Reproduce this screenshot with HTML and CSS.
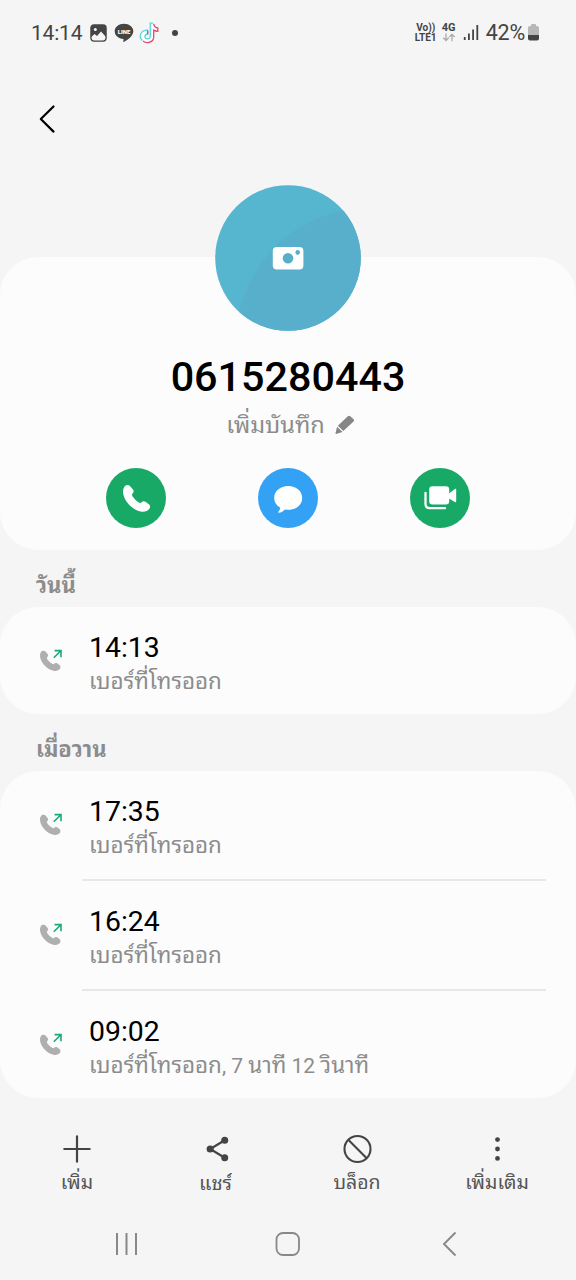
FILE: index.html
```html
<!DOCTYPE html>
<html lang="th">
<head>
<meta charset="utf-8">
<title>0615280443</title>
<link rel="stylesheet" href="styles.css">
</head>
<body>
<svg class="defs" width="0" height="0" aria-hidden="true">
  <symbol id="handset" viewBox="16.8 17 26.8 26.8">
    <path d="M18.800 18.100C20.200 16.600 22.600 16.700 23.900 18.200L26.700 21.500C27.800 22.900 27.500 24.300 26.500 25.300C25.600 26.200 25.500 27 26.200 28.100C27.800 30.600 30 32.900 32.600 34.400C33.700 35.100 34.500 34.900 35.300 34.100C36.400 32.900 37.900 32.900 39.100 33.700L42.500 36.200C43.900 37.300 44 39 43.100 40.400C41.200 43.200 38 44 34.300 43.300C26.300 41.700 18.300 33.500 17 25.700C16.500 22.600 17.100 19.900 18.800 18.100Z"/>
  </symbol>
  <symbol id="outgoing" viewBox="0 0 24 24">
    <use href="#handset" x="1" y="2.5" width="20.6" height="20.6" fill="#afafaf"/>
    <path d="M14.800 9.800L21.600 3M15.600 2.600H22V9.300" fill="none" stroke="#19a974" stroke-width="1.600"/>
  </symbol>
</svg>
<header class="status">
  <div class="status-left">
    <span class="clock">14:14</span>
    <svg class="gallery" width="17" height="18" viewBox="0 0 17 18"><rect x=".9" y=".9" width="15.2" height="16.2" rx="3" fill="none" stroke="#444" stroke-width="1.3"/><path d="M1 4a3 3 0 0 1 3-3h9a3 3 0 0 1 3 3v9l-5-5.5-4 4.5-2.500-2L1 13.200z" fill="#444"/><circle cx="5.300" cy="5.500" r="1.500" fill="#f6f6f6"/></svg>
    <svg class="line" width="20" height="20" viewBox="0 0 20 20"><path d="M10 .8c5.200 0 9.300 3.300 9.300 7.500 0 4.300-4.600 8-9.100 10.500-.7.400-1 .1-.9-.6l.2-2.200C4.500 15.800.7 12.500.7 8.300.7 4.100 4.800.8 10 .8z" fill="#444"/><text x="10" y="10.500" class="line-text">LINE</text></svg>
    <svg class="tiktok" width="20" height="22" viewBox="0 0 20 22"><path d="M11.500 1.500h3c.4 2.600 1.600 4 4 4.400v3c-1.600 0-2.800-.4-4-1.200v6.600c0 7-12.500 8-12.500.3 0-3.700 2.700-6 6.300-5.800v3.200c-4 0-4 4.700-.6 4.700 2.600 0 3.800-1.300 3.800-3.500z" fill="#fff"/><g fill="none" stroke-width="1.300"><path d="M14 1.200h-2.700v13c0 3.800-5.800 3.500-5.300 0 .2-1.500 1.200-2.200 2.500-2.200V8.200C3.800 7.800.8 11.600 1.200 14.800c.2 1.400.8 2.600 2 3.600" stroke="#53d8dc"/><path d="M14.700 1.800c.4 2.400 1.700 3.900 4.100 4.200v3.300c-1.600 0-2.900-.4-4.100-1.200v6.600c0 5.600-6.700 7.600-10.700 4.300M8.800 8.500v3.700" stroke="#e6476b"/></g></svg>
    <span class="dot"></span>
  </div>
  <div class="status-right">
    <div class="tiny volte"><span>Vo))</span><span>LTE1</span></div>
    <div class="tiny net"><span>4G</span><svg width="14" height="9" viewBox="0 0 14 9"><path d="M4 .5v7M1.300 4.800L4 7.500l2.700-2.700M10 8.300v-7M7.300 4L10 1.300 12.700 4" fill="none" stroke="#aaa" stroke-width="1.300"/></svg></div>
    <svg class="signal" width="16" height="17" viewBox="0 0 16 17"><path d="M1.700 16v-3M5.900 16V9.500M10.100 16V5.500M14.300 16V1" stroke="#444" stroke-width="1.800"/></svg>
    <span class="percent">42%</span>
    <svg class="battery" width="11" height="18" viewBox="0 0 11 18"><path d="M3 2V1q0-1 1-1h3q1 0 1 1v1h1q2 0 2 2v7H0V4q0-2 2-2z" fill="#b7b7b7"/><path d="M0 11h11v3.500q0 2-2 2H2q-2 0-2-2z" fill="#444"/></svg>
  </div>
</header>
<nav class="topbar"><svg width="18" height="30" viewBox="0 0 18 30"><path d="M15.500 2.500L2.800 15l12.700 12.600" fill="none" stroke="#000" stroke-width="2.200" stroke-linecap="round" stroke-linejoin="round"/></svg></nav>
<main>
  <section class="card profile">
    <svg class="avatar" width="146" height="146" viewBox="0 0 146 146">
      <clipPath id="round"><circle cx="73" cy="73" r="72.800"/></clipPath>
      <g clip-path="url(#round)"><path d="M0 0h146v146H0z" fill="#56b6cf"/><path d="M22 135C35 78 70 38 130 25L146 22V146H22z" fill="#57afcb"/></g>
      <rect x="57.800" y="62" width="30.600" height="22.500" rx="4" fill="#fff"/>
      <circle cx="73" cy="73.200" r="5.300" fill="#57afcb"/><circle cx="82.700" cy="67.400" r="2.300" fill="#57afcb"/>
    </svg>
    <h1 class="number">0615280443</h1>
    <div class="note"><span class="note-text">เพิ่มบันทึก</span><svg width="20" height="20" viewBox="0 0 20 20"><path d="M12.800 1.200q1.300-1 2.500 0l3.300 3.100q1.100 1.200 0 2.300L8.300 15.900 2.900 10.800zM2.100 11.800l5.400 5.100-6.400 2q-.7 0-.6-.6z" fill="#868686"/></svg></div>
    <div class="actions">
      <div class="action green"><svg width="27" height="27" fill="#fff"><use href="#handset"/></svg></div>
      <div class="action blue"><svg width="60" height="60" viewBox="0 0 60 60"><path d="M30.200 18.100c8 0 14 5.100 14 11.800s-6 11.900-14 11.900c-1.200 0-2.400-.1-3.500-.4-1.300 1.700-3.500 3.100-5.800 3.300-.8 0-.9-.6-.4-1.100 1.200-1.200 1.600-2.600 1.500-4.100-3.600-2.200-5.800-5.600-5.800-9.600 0-6.700 6-11.800 14-11.800z" fill="#fff"/></svg></div>
      <div class="action green"><svg width="60" height="60" viewBox="0 0 60 60"><rect x="19.200" y="18.300" width="20" height="18.200" rx="3.300" fill="#fff"/><path d="M39 25.500l6.200-4.700q1-.5 1 .6v12.200q0 1.100-1 .6L39 30.500z" fill="#fff"/><path d="M15.500 25v11q0 4.200 4.200 4.200h15.300" fill="none" stroke="#fff" stroke-width="2.300" stroke-linecap="round"/></svg></div>
    </div>
  </section>
  <h2 class="day">วันนี้</h2>
  <section class="card list">
    <article class="call single"><svg class="call-icon"><use href="#outgoing"/></svg><div class="call-body"><div class="time">14:13</div><div class="detail">เบอร์ที่โทรออก</div></div></article>
  </section>
  <h2 class="day">เมื่อวาน</h2>
  <section class="card list">
    <article class="call"><svg class="call-icon"><use href="#outgoing"/></svg><div class="call-body"><div class="time">17:35</div><div class="detail">เบอร์ที่โทรออก</div></div></article>
    <article class="call"><svg class="call-icon"><use href="#outgoing"/></svg><div class="call-body"><div class="time">16:24</div><div class="detail">เบอร์ที่โทรออก</div></div></article>
    <article class="call"><svg class="call-icon"><use href="#outgoing"/></svg><div class="call-body"><div class="time">09:02</div><div class="detail">เบอร์ที่โทรออก<span class="digits">, 7 </span>นาที<span class="digits"> 12 </span>วินาที</div></div></article>
  </section>
</main>
<footer class="toolbar">
  <div class="tool"><svg viewBox="0 0 30 30"><path d="M15 2.300v25.400M2.300 15h25.400" stroke="#444" stroke-width="2.200" stroke-linecap="round"/></svg><span>เพิ่ม</span></div>
  <div class="tool"><svg viewBox="0 0 30 30"><path d="M22.700 6.200L8.200 15l14.500 8.800" fill="none" stroke="#444" stroke-width="2.200"/><g fill="#444"><circle cx="22.700" cy="6.200" r="3.500"/><circle cx="8.200" cy="15" r="3.600"/><circle cx="22.700" cy="23.800" r="3.500"/></g></svg><span class="share">แชร์</span></div>
  <div class="tool"><svg viewBox="0 0 30 30"><g fill="none" stroke="#444" stroke-width="2.100"><circle cx="15.500" cy="15" r="13"/><path d="M6.300 5.800l18.400 18.400"/></g></svg><span>บล็อก</span></div>
  <div class="tool"><svg viewBox="0 0 30 30"><g fill="#444"><circle cx="15.500" cy="5.600" r="2.400"/><circle cx="15.500" cy="15" r="2.400"/><circle cx="15.500" cy="24.400" r="2.400"/></g></svg><span>เพิ่มเติม</span></div>
</footer>
<nav class="navbar">
  <svg viewBox="0 0 26 26"><path d="M3.500 2v22M13 2v22M22.500 2v22" stroke="#888" stroke-width="2"/></svg>
  <svg viewBox="0 0 26 26"><rect x="2" y="2" width="22.500" height="22" rx="6.500" fill="none" stroke="#888" stroke-width="1.800"/></svg>
  <svg viewBox="0 0 26 26"><path d="M20 1.500L8.500 13 20 24.500" fill="none" stroke="#888" stroke-width="1.900"/></svg>
</nav>
</body>
</html>
```
FILE: styles.css
```css
* { box-sizing: border-box; }
body {
  margin: 0;
  width: 576px;
  height: 1280px;
  overflow: hidden;
  display: flex;
  flex-direction: column;
  background: #f5f5f5;
  color: #000;
  font-family: Roboto, "Noto Sans Thai Looped", "Droid Sans Thai", Loma, Waree, Garuda, Tahoma, sans-serif;
}
svg { display: block; flex: none; }
.defs { display: none; }
.status {
  height: 65px;
  padding: 0 37px 0 31px;
  display: flex;
  align-items: center;
  justify-content: space-between;
  color: #444;
}
.status-left, .status-right { display: flex; align-items: center; }
.clock { font-size: 21px; width: 59px; letter-spacing: -0.2px; }
.line { margin-left: 7px; }
.line-text {
  font: 900 6px Roboto, sans-serif;
  text-anchor: middle;
  fill: #fff;
}
.tiktok { margin-left: 5px; }
.dot {
  width: 6px;
  height: 6px;
  border-radius: 50%;
  background: #444;
  margin-left: 13px;
}
.tiny {
  display: flex;
  flex-direction: column;
  align-items: center;
  font-size: 10px;
  font-weight: 700;
  line-height: 10px;
}
.volte { width: 22px; }
.net { width: 16px; margin-left: 4px; font-size: 11px; }
.signal { margin-left: 6px; }
.percent { font-size: 21.5px; margin: 0 3px 0 7px; letter-spacing: -0.2px; }
.topbar { height: 192px; padding: 39px 0 0 38px; }
.card { background: #fcfcfc; border-radius: 38px; }
.profile {
  height: 293px;
  display: flex;
  flex-direction: column;
  align-items: center;
}
.avatar { margin-top: -72px; }
.number {
  margin: 21px 0 0;
  font-size: 41.3px;
  line-height: 50px;
  font-weight: 500;
}
.note {
  height: 36px;
  margin-top: 5px;
  padding-left: 5px;
  display: flex;
  align-items: center;
  gap: 10px;
  color: #8c8c8c;
}
.note-text { font-size: 23.5px; line-height: 36px; white-space: nowrap; }
.actions { display: flex; gap: 92px; margin-top: 25px; }
.action {
  width: 60px;
  height: 60px;
  border-radius: 50%;
  display: grid;
  place-items: center;
}
.green { background: #17a965; }
.blue { background: #33a2f5; }
.day {
  margin: 0;
  height: 57px;
  padding: 20px 0 0 36px;
  font-size: 22px;
  line-height: 32px;
  font-weight: 700;
  color: #8c8c8c;
}
.call { display: flex; height: 110px; }
.call.single { height: 107px; }
.call-icon { width: 24px; height: 24px; margin: 41px 0 0 39px; }
.call-body { flex: 1; margin: 0 30px 0 19px; padding: 24px 0 0 7px; }
.call + .call .call-body { border-top: 2px solid #e8e8e8; margin-top: -2px; }
.call:last-child { height: 107px; }
.time { font-size: 28.4px; line-height: 34px; }
.detail { font-size: 22.4px; line-height: 32px; color: #8c8c8c; white-space: nowrap; }
.digits { font-size: 21px; }
.toolbar { height: 110px; padding: 36px 9px 0 7px; display: flex; }
.tool {
  flex: 1;
  display: flex;
  flex-direction: column;
  align-items: center;
  color: #555;
  font-size: 19.5px;
  line-height: 30px;
}
.tool svg { width: 30px; height: 30px; }
.tool span { margin-top: 4px; white-space: nowrap; }
.tool .share { font-size: 20px; padding-right: 3px; }
.navbar { height: 70px; padding: 23px 47px 0 46px; display: flex; }
.navbar svg { flex: 1; height: 26px; width: 0; }
```
